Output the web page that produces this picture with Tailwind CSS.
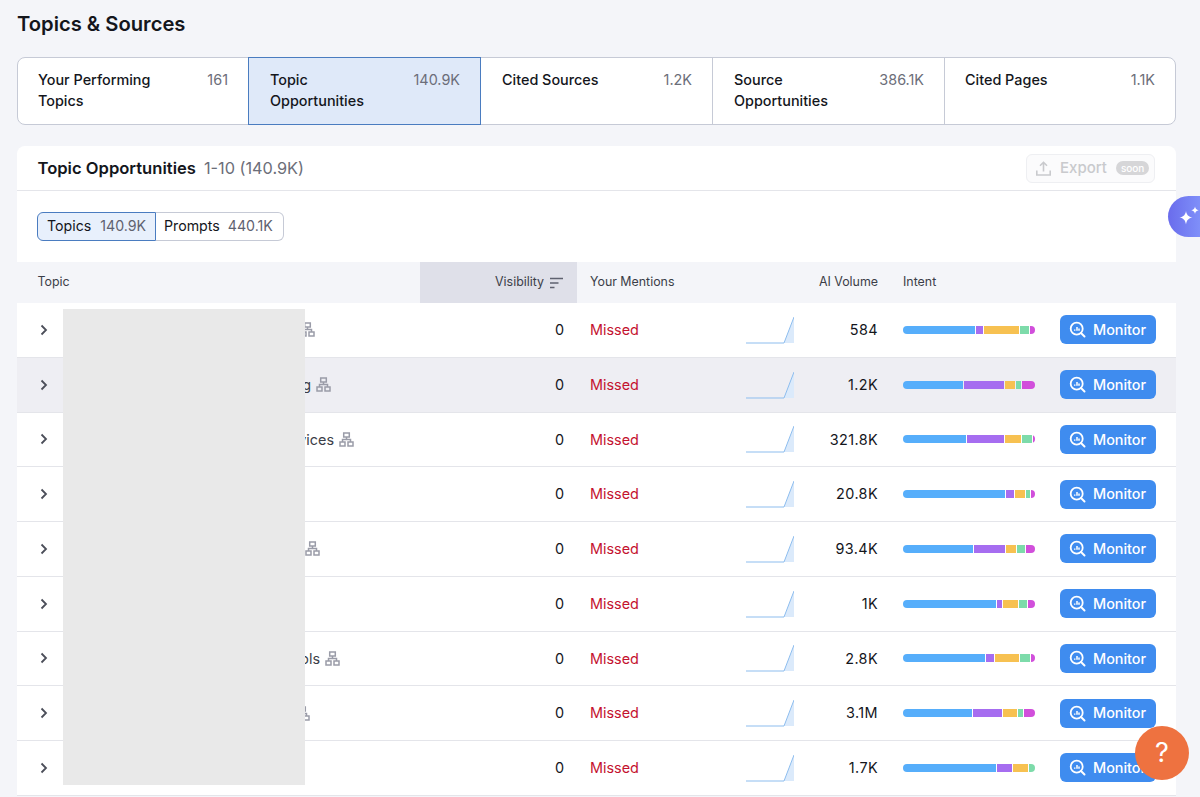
<!DOCTYPE html>
<html lang="en">
<head>
    <meta charset="UTF-8">
    <meta name="viewport" content="width=device-width, initial-scale=1.0">
    <title>Topics &amp; Sources</title>
    <script src="https://cdn.jsdelivr.net/npm/@tailwindcss/browser@4"></script>
</head>
<body class="relative h-[797px] w-[1200px] overflow-hidden bg-[#f4f5f9] font-['Inter',sans-serif] text-[#14161c]">
    <div class="pl-[17px] pr-[24px]">
        <h1 class="flex h-[57px] items-start pt-[11px] text-[20.2px] leading-[26px] font-semibold">Topics &amp; Sources</h1>

        <!-- Top tabs -->
        <div class="flex h-[68px] rounded-lg border border-[#c6cad6] bg-white text-[14.4px] leading-[21px] font-medium">
            <div class="flex w-[230px] justify-between py-[11px] pr-[20px] pl-[20px]"><span class="w-[130px]">Your Performing Topics</span><span class="font-normal text-[#6c6e79]">161</span></div>
            <div class="-my-px flex w-[233px] justify-between border border-[#4a7cc0] bg-[#dfe9f9] py-[11px] pr-[20px] pl-[21px]"><span class="w-[110px]">Topic Opportunities</span><span class="font-normal text-[#6c6e79]">140.9K</span></div>
            <div class="flex w-[232px] justify-between border-r border-[#c6cad6] py-[11px] pr-[20px] pl-[21px]"><span>Cited Sources</span><span class="font-normal text-[#6c6e79]">1.2K</span></div>
            <div class="flex w-[232px] justify-between border-r border-[#c6cad6] py-[11px] pr-[20px] pl-[21px]"><span class="w-[110px]">Source Opportunities</span><span class="font-normal text-[#6c6e79]">386.1K</span></div>
            <div class="flex flex-1 justify-between py-[11px] pr-[20px] pl-[20px]"><span>Cited Pages</span><span class="font-normal text-[#6c6e79]">1.1K</span></div>
        </div>

        <!-- Table card -->
        <div class="mt-[21px] rounded-t-lg bg-white">
            <div class="flex h-[45px] items-center justify-between border-b border-[#e4e5ea] pr-[21px] pl-[20.5px]">
                <div class="flex items-baseline gap-[8px] pt-[1px]">
                    <span class="text-[16.6px] font-semibold">Topic Opportunities</span>
                    <span class="text-[16.3px] text-[#6c6e79]">1-10 (140.9K)</span>
                </div>
                <div class="flex h-[29px] w-[129px] items-center rounded-md border border-[#eeeff2] bg-[#fbfbfc] pl-[8px] text-[15px] font-medium text-[#c9cacd]">
                    <svg class="h-[17px] w-[17px]" viewBox="0 0 17 17" fill="none" stroke="#c9cacd" stroke-width="1.6"><path d="M8.5 11.5V2.5M5 5.8l3.5-3.5L12 5.8M1.8 10.5v4.5h13.4v-4.5"/></svg>
                    <span class="ml-[8px]">Export</span>
                    <span class="ml-[9px] rounded-full bg-[#d6d6d8] px-[5px] text-[10px] leading-[14px] font-medium text-white">soon</span>
                </div>
            </div>

            <div class="flex h-[71px] items-start pt-[21px] pl-[20px] text-[14.2px]">
                <div class="flex h-[29px] w-[119px] items-center rounded-l-md border border-[#4a7cc0] bg-[#e8f0fc] pb-[1px] pl-[9px]"><span>Topics</span><span class="ml-[9px] text-[#5f6270]">140.9K</span></div>
                <div class="flex h-[29px] w-[128px] items-center rounded-r-md border border-l-0 border-[#c6cad6] pb-[1px] pl-[8px]"><span>Prompts</span><span class="ml-[8px] text-[#5f6270]">440.1K</span></div>
            </div>

            <div class="flex h-[41px] items-center bg-[#f4f5f9] text-[12.4px] text-[#3b3e48]">
                <div class="w-[403px] pl-[20.5px]">Topic</div>
                <div class="flex h-full w-[157px] items-center justify-end gap-[6px] bg-[#dfe0e9] pr-[14px]">
                    <span>Visibility</span>
                    <svg class="h-[12px] w-[13px]" viewBox="0 0 13 12" fill="none" stroke="#5f6270" stroke-width="1.5"><path d="M0 1.5h13M0 6h8.5M0 10.5h4.5"/></svg>
                </div>
                <div class="w-[181px] pl-[13px]">Your Mentions</div>
                <div class="w-[120px] text-right">AI Volume</div>
                <div class="pl-[25px]">Intent</div>
            </div>

            <div id="rows"></div>
        </div>
    </div>

    <!-- Redacted topic names -->
    <div class="absolute top-[309px] left-[63px] h-[476px] w-[242px] bg-[#e9e9e9]"></div>

    <!-- Floating assistant tab -->
    <div class="absolute top-[196px] left-[1168px] flex h-[41px] w-[32px] items-center rounded-l-full bg-gradient-to-r from-[#6a6cec] to-[#7f8ff9] pl-[9px]">
        <svg class="h-[23px] w-[23px] shrink-0" viewBox="0 0 23 23" fill="white"><path d="M9 6c.7 4 2.3 5.600 6.500 6.500C11.300 13.400 9.700 15 9 19.500 8.300 15 6.700 13.400 2.500 12.500 6.700 11.600 8.300 10 9 6z"/><path d="M18 1.500c.4 2.300 1.400 3.300 3.700 3.700-2.300.4-3.300 1.400-3.700 3.700-.4-2.300-1.400-3.300-3.700-3.700 2.300-.4 3.300-1.400 3.700-3.700z"/></svg>
    </div>

    <!-- Help button -->
    <div class="absolute top-[726px] left-[1135px] flex h-[54px] w-[54px] items-center justify-center rounded-full bg-[#ee7240] text-[27px] text-white">?</div>

    <script>
        // tail = end of the topic name visible past the redaction, iconEnd = right edge of the org icon
        const topics = [
            { volume: "584", tail: "", iconEnd: 315, bar: [72, 7, 35, 9, 5] },
            { volume: "1.2K", tail: "g", iconEnd: 331, bar: [60, 40, 10, 5, 13], active: true },
            { volume: "321.8K", tail: "rvices", iconEnd: 354, bar: [63, 37, 16, 9.5, 2.5] },
            { volume: "20.8K", tail: "", iconEnd: 0, bar: [102, 8, 10, 4, 4] },
            { volume: "93.4K", tail: "", iconEnd: 320, bar: [70, 31, 10, 8, 9] },
            { volume: "1K", tail: "", iconEnd: 0, bar: [93, 5, 15, 7.5, 7.5] },
            { volume: "2.8K", tail: "ols", iconEnd: 340, bar: [82, 8, 24, 10, 4] },
            { volume: "3.1M", tail: "", iconEnd: 310, bar: [69, 29, 14, 5, 11] },
            { volume: "1.7K", tail: "", iconEnd: 0, bar: [93, 15, 15, 6] }
        ];

        const barColors = ["bg-[#56aefb]", "bg-[#a66df0]", "bg-[#f7c151]", "bg-[#7ddbaa]", "bg-[#d14fdb]"];

        const orgIcon = `<svg class="h-[15px] w-[15px] shrink-0" viewBox="0 0 15 15" fill="none" stroke="#9a9ca8" stroke-width="1.5"><rect x="4.7" y="1" width="5.6" height="4"/><rect x="1" y="10" width="5" height="4"/><rect x="9" y="10" width="5" height="4"/><path d="M7.5 5v2.5M3.5 10V7.5h8V10"/></svg>`;

        const monitorIcon = `<svg class="h-[17px] w-[17px] shrink-0" viewBox="0 0 17 17" fill="none" stroke="white"><circle cx="7.7" cy="7.7" r="6" stroke-width="1.8"/><path d="M12 12l3.5 3.5" stroke-width="2" stroke-linecap="round"/><path d="M5.7 8.5v1.2M8 6v3.7M10 7.5v2.2" stroke-width="1.5"/></svg>`;

        const sparkline = `<svg class="h-[28px] w-[48px]" viewBox="0 0 48 28"><path d="M38 27L48 1V27Z" fill="#dbeafb"/><path d="M0 27H38L48 1" fill="none" stroke="#8dbdee" stroke-width="1"/></svg>`;

        document.getElementById("rows").innerHTML = topics.map((t) => `
            <div class="flex h-[54.75px] items-center border-b border-[#e4e5ea] text-[14.4px] ${t.active ? "bg-[#eeeef3]" : ""}">
                <div class="flex w-[403px] items-center pl-[23px]">
                    <svg class="h-[12px] w-[8px] shrink-0" viewBox="0 0 8 12" fill="none" stroke="#4b4e59" stroke-width="1.8"><path d="M1.5 1.5L6 6l-4.500 4.500"/></svg>
                    <div class="flex items-center justify-end gap-[5px] text-[#3b3e48]" style="width:${t.iconEnd ? t.iconEnd - 48 : 0}px">
                        <span>${t.tail}</span>${t.iconEnd ? orgIcon : ""}
                    </div>
                </div>
                <div class="w-[157px] pr-[13px] text-right">0</div>
                <div class="w-[169px] pl-[13px] text-[#c4122f]">Missed</div>
                <div class="w-[48px]">${sparkline}</div>
                <div class="w-[84px] text-right tracking-[0.4px]">${t.volume}</div>
                <div class="ml-[25px] flex h-[8px] w-[132px] gap-[1px] overflow-hidden rounded-full">
                    ${t.bar.map((w, i) => `<div class="${barColors[i]}" style="width:${w}px"></div>`).join("")}
                </div>
                <button class="ml-[25px] flex h-[29px] w-[96px] items-center gap-[6px] rounded-md bg-[#3f8cef] pl-[9px] font-medium text-white">${monitorIcon}<span class="ml-[1px]">Monitor</span></button>
            </div>`).join("");
    </script>
</body>
</html>
